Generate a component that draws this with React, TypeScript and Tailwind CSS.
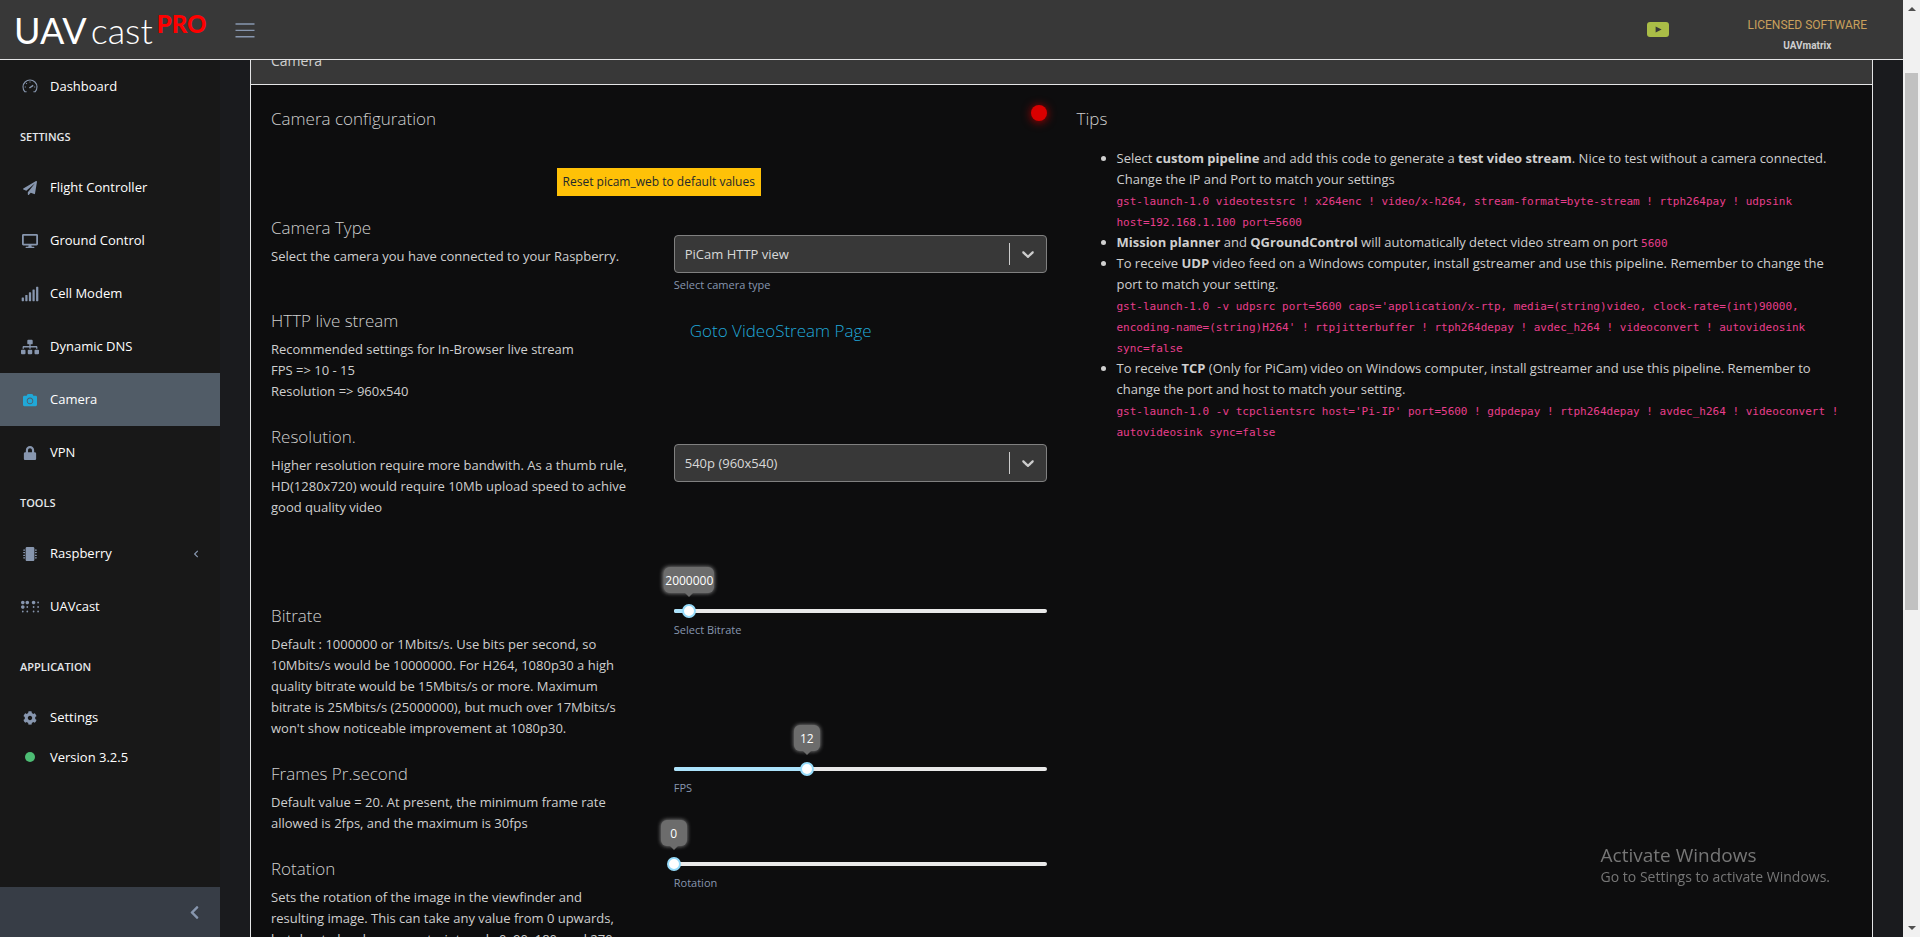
import { useState, type ReactNode } from "react";
import {
  FaBraille,
  FaCamera,
  FaChevronLeft,
  FaCog,
  FaDesktop,
  FaLock,
  FaMicrochip,
  FaPaperPlane,
  FaSignal,
  FaSitemap,
} from "react-icons/fa";

function SpeedometerIcon() {
  return (
    <svg viewBox="0 0 16 16" className="h-4 w-4" fill="none" stroke="currentColor" strokeWidth="1.1">
      <path d="M4.6 12.8H2.9A7 7 0 1 1 13.1 12.8h-1.7" />
      <path d="M7.4 9 11.2 6.4" strokeWidth="1.5" />
      <path d="M8 2.6v1M4.2 4.2l.7.7M2.8 8h1M12.2 8h1" />
    </svg>
  );
}

function DotIcon() {
  return <span className="block h-[10px] w-[10px] rounded-full bg-[#4dbd74]" />;
}

function Logo() {
  return (
    <a href="#home" className="flex w-[206px] items-start pl-[14px] font-[Lato,sans-serif] leading-[58px] text-white">
      <span className="text-[36px]">UAV</span>
      <span className="px-1 text-[36px] font-light">cast</span>
      <span className="text-[24px] font-black leading-[46px] text-[#fe0000]">PRO</span>
    </a>
  );
}

function Header() {
  return (
    <header className="z-10 flex h-[60px] shrink-0 items-center border-b border-[#e4e5e6] bg-[#383838]">
      <Logo />
      <button type="button" aria-label="Toggle sidebar" className="ml-[29px] text-[#8796ae]">
        <svg viewBox="0 0 20 16" className="h-4 w-5" stroke="currentColor" strokeWidth="1.4">
          <path d="M.5 2h19M.5 8.4h19M.5 14.8h19" />
        </svg>
      </button>
      <a href="#youtube" aria-label="YouTube" className="ml-auto">
        <svg viewBox="0 0 22 15" className="h-[15px] w-[22px]">
          <rect width="22" height="15" rx="3" fill="#aabd47" />
          <path d="M8.6 4.5v6l6-3z" fill="#383838" />
        </svg>
      </a>
      <div className="mr-9 ml-[78px] pt-2 text-center font-[Roboto,sans-serif]">
        <div className="text-[12px] leading-6 text-[#c9a05c]">LICENSED SOFTWARE</div>
        <div className="text-[10px] leading-[18px] font-bold text-[#cfcfcf]">UAVmatrix</div>
      </div>
    </header>
  );
}

type NavItemProps = { icon: ReactNode; label: string; active?: boolean; children?: ReactNode };

function NavItem({ icon, label, active, children }: NavItemProps) {
  return (
    <a
      href={"#" + label}
      className={
        active
          ? "flex h-[53px] items-center bg-[#515c67] px-5 text-[#20a8d8]"
          : "flex h-[53px] items-center px-5 text-[#8796ae]"
      }
    >
      <span className="flex w-5 justify-center text-[14px]">{icon}</span>
      <span className="pl-[10px] text-white">{label}</span>
      {children}
    </a>
  );
}

function NavTitle({ children }: { children: string }) {
  return <div className="h-12 px-5 text-[11px] leading-[48px] font-semibold text-[#e4e7ea]">{children}</div>;
}

function Sidebar() {
  return (
    <aside className="flex w-[220px] shrink-0 flex-col bg-[#181818]">
      <nav className="flex-1 overflow-hidden">
        <NavItem icon={<SpeedometerIcon />} label="Dashboard" />
        <NavTitle>SETTINGS</NavTitle>
        <NavItem icon={<FaPaperPlane />} label="Flight Controller" />
        <NavItem icon={<FaDesktop className="h-4 w-4" />} label="Ground Control" />
        <NavItem icon={<FaSignal className="h-[18px] w-[18px]" />} label="Cell Modem" />
        <NavItem icon={<FaSitemap className="h-[18px] w-[18px]" />} label="Dynamic DNS" />
        <NavItem icon={<FaCamera />} label="Camera" active />
        <NavItem icon={<FaLock />} label="VPN" />
        <NavTitle>TOOLS</NavTitle>
        <NavItem icon={<FaMicrochip />} label="Raspberry">
          <FaChevronLeft className="ml-auto h-2 w-2" />
        </NavItem>
        <NavItem icon={<FaBraille className="h-[18px] w-[18px]" />} label="UAVcast" />
        <div className="pt-[10px]">
          <NavTitle>APPLICATION</NavTitle>
        </div>
        <NavItem icon={<FaCog />} label="Settings" />
        <div className="flex h-[26px] items-center px-5 text-white">
          <span className="flex w-5 justify-center">
            <DotIcon />
          </span>
          <span className="pl-[10px]">Version 3.2.5</span>
        </div>
      </nav>
      <button
        type="button"
        aria-label="Minimize sidebar"
        className="flex h-[50px] items-center justify-end bg-[#373d46] px-[18px] text-[#8796ae]"
      >
        <FaChevronLeft className="h-[15px] w-[15px]" />
      </button>
    </aside>
  );
}

type SelectProps = { id: string; options: string[]; label?: string };

function Select({ id, options, label }: SelectProps) {
  return (
    <div className="pt-[18px]">
      <div className="relative">
        <select
          id={id}
          aria-label={label ? undefined : id}
          className="block h-[38px] w-full appearance-none rounded border border-[#808080] bg-[#383838] px-[10px] text-[#d8d8d8]"
        >
          {options.map((o) => (
            <option key={o}>{o}</option>
          ))}
        </select>
        <div className="pointer-events-none absolute inset-y-2 right-0 flex w-[38px] items-center justify-center border-l border-[#cccccc] text-[#cccccc]">
          <svg viewBox="0 0 20 20" className="h-5 w-5" fill="currentColor">
            <path d="M4.516 7.548c.436-.446 1.043-.481 1.576 0L10 11.295l3.908-3.747c.533-.481 1.141-.446 1.574 0 .436.445.408 1.197 0 1.615-.406.418-4.695 4.502-4.695 4.502a1.095 1.095 0 0 1-1.576 0S4.924 9.581 4.516 9.163s-.436-1.17 0-1.615z" />
          </svg>
        </div>
      </div>
      {label && (
        <label htmlFor={id} className="mt-1 block text-[11px] leading-4 text-[#8796ae]">
          {label}
        </label>
      )}
    </div>
  );
}

type SliderProps = { id: string; label: string; min: number; max: number; start: number };

function Slider({ id, label, min, max, start }: SliderProps) {
  const [value, setValue] = useState(start);
  const percent = ((value - min) / (max - min)) * 100 + "%";

  return (
    <div>
      <div className="relative h-3 pt-1">
        <div className="h-1 rounded-full bg-[#e9e9e9]">
          <div className="h-1 rounded-full bg-[#abe2fb]" style={{ width: percent }} />
        </div>
        {/* the input is wider than the rail so the thumb can centre on both ends */}
        <input
          id={id}
          type="range"
          min={min}
          max={max}
          value={value}
          onChange={(e) => setValue(Number(e.target.value))}
          className="absolute inset-y-0 -left-[7px] m-0 h-3 w-[calc(100%+14px)] cursor-pointer appearance-none bg-transparent [&::-webkit-slider-thumb]:h-[14px] [&::-webkit-slider-thumb]:w-[14px] [&::-webkit-slider-thumb]:appearance-none [&::-webkit-slider-thumb]:rounded-full [&::-webkit-slider-thumb]:border-2 [&::-webkit-slider-thumb]:border-solid [&::-webkit-slider-thumb]:border-[#96dbfa] [&::-webkit-slider-thumb]:bg-white"
        />
        <output
          htmlFor={id}
          className="absolute bottom-6 flex h-[26px] min-w-[26px] -translate-x-1/2 items-center justify-center rounded-md bg-[#6c6c6c] px-px text-[12px] text-white shadow-[0_0_4px_#9a9a9a]"
          style={{ left: percent }}
        >
          {value}
          <span className="absolute top-full border-x-4 border-t-4 border-x-transparent border-t-[#6c6c6c]" />
        </output>
      </div>
      <label htmlFor={id} className="mt-[5px] block text-[11px] leading-4 text-[#8796ae]">
        {label}
      </label>
    </div>
  );
}

type FieldProps = { title: string; text: ReactNode; className: string; children: ReactNode };

function Field({ title, text, className, children }: FieldProps) {
  return (
    <div className={"grid grid-cols-2 gap-[30px] " + className}>
      <div>
        <Heading>{title}</Heading>
        <p className="mt-2 pr-3">{text}</p>
      </div>
      {children}
    </div>
  );
}

function Heading({ children }: { children: string }) {
  return <h5 className="text-[17px] leading-[21px] font-light">{children}</h5>;
}

function Code({ children }: { children: string }) {
  return <code className="font-['DejaVu_Sans_Mono',monospace] text-[11px] leading-4 text-[#e83e8c]">{children}</code>;
}

function CameraForm() {
  return (
    <form>
      <div className="flex items-start justify-between">
        <div className="pt-[3px]">
          <Heading>Camera configuration</Heading>
        </div>
        <span className="h-4 w-4 rounded-full bg-[#d90000] shadow-[0_1px_10px_#b00000]" />
      </div>
      <div className="mt-[39px] mb-[21px] text-center">
        <button type="button" className="h-7 bg-[#ffc107] px-[6px] text-[12px] leading-7 text-[#23282c]">
          Reset picam_web to default values
        </button>
      </div>
      <Field title="Camera Type" text="Select the camera you have connected to your Raspberry." className="min-h-[93px]">
        <Select id="camera-type" options={["PiCam HTTP view"]} label="Select camera type" />
      </Field>
      <Field
        title="HTTP live stream"
        text={
          <>
            Recommended settings for In-Browser live stream
            <br />
            FPS =&gt; 10 - 15
            <br />
            Resolution =&gt; 960x540
          </>
        }
        className="pb-6"
      >
        <a href="#video" className="px-4 pt-[10px] text-[17px] leading-[21px] font-light text-[#20a8d8]">
          Goto VideoStream Page
        </a>
      </Field>
      <Field
        title="Resolution."
        text="Higher resolution require more bandwith. As a thumb rule, HD(1280x720) would require 10Mb upload speed to achive good quality video"
        className="pb-[87px]"
      >
        <Select id="resolution" options={["540p (960x540)"]} />
      </Field>
      <Field
        title="Bitrate"
        text="Default : 1000000 or 1Mbits/s. Use bits per second, so 10Mbits/s would be 10000000. For H264, 1080p30 a high quality bitrate would be 15Mbits/s or more. Maximum bitrate is 25Mbits/s (25000000), but much over 17Mbits/s won't show noticeable improvement at 1080p30."
        className="pb-6"
      >
        <Slider id="bitrate" label="Select Bitrate" min={1000000} max={25000000} start={2000000} />
      </Field>
      <Field
        title="Frames Pr.second"
        text="Default value = 20. At present, the minimum frame rate allowed is 2fps, and the maximum is 30fps"
        className="pb-6"
      >
        <Slider id="fps" label="FPS" min={2} max={30} start={12} />
      </Field>
      <Field
        title="Rotation"
        text="Sets the rotation of the image in the viewfinder and resulting image. This can take any value from 0 upwards, but due to hardware constraints only 0, 90, 180, and 270 degree rotations are supported."
        className="pb-6"
      >
        <Slider id="rotation" label="Rotation" min={0} max={270} start={0} />
      </Field>
    </form>
  );
}

function Tips() {
  return (
    <section className="pt-[3px]">
      <Heading>Tips</Heading>
      <ul className="mt-[19px] list-disc pl-10">
        <li>
          Select <b>custom pipeline</b> and add this code to generate a <b>test video stream</b>. Nice to test without a
          camera connected. Change the IP and Port to match your settings
          <br />
          <Code>
            gst-launch-1.0 videotestsrc ! x264enc ! video/x-h264, stream-format=byte-stream ! rtph264pay ! udpsink
            host=192.168.1.100 port=5600
          </Code>
        </li>
        <li>
          <b>Mission planner</b> and <b>QGroundControl</b> will automatically detect video stream on port{" "}
          <Code>5600</Code>
        </li>
        <li>
          To receive <b>UDP</b> video feed on a Windows computer, install gstreamer and use this pipeline. Remember to
          change the port to match your setting.
          <br />
          <Code>
            gst-launch-1.0 -v udpsrc port=5600 caps='application/x-rtp, media=(string)video, clock-rate=(int)90000,
            encoding-name=(string)H264' ! rtpjitterbuffer ! rtph264depay ! avdec_h264 ! videoconvert ! autovideosink
            sync=false
          </Code>
        </li>
        <li>
          To receive <b>TCP</b> (Only for PiCam) video on Windows computer, install gstreamer and use this pipeline.
          Remember to change the port and host to match your setting.
          <br />
          <Code>
            gst-launch-1.0 -v tcpclientsrc host='Pi-IP' port=5600 ! gdpdepay ! rtph264depay ! avdec_h264 ! videoconvert !
            autovideosink sync=false
          </Code>
        </li>
      </ul>
    </section>
  );
}

function ScrollBar() {
  return (
    <div aria-hidden="true" className="flex w-[17px] shrink-0 flex-col items-center justify-between bg-[#f1f1f1] py-[7px]">
      <span className="border-x-4 border-b-4 border-x-transparent border-b-[#505050]" />
      <div className="flex w-[13px] flex-1 flex-col pt-[62px]">
        <div className="h-[63%] bg-[#c1c1c1]" />
      </div>
      <span className="border-x-4 border-t-4 border-x-transparent border-t-[#505050]" />
    </div>
  );
}

export default function App() {
  return (
    <div className="flex h-screen overflow-hidden font-['Open_Sans','Noto_Sans',sans-serif] text-[13px] leading-[21px] text-[#cfcfcf]">
      <div className="flex min-w-0 flex-1 flex-col">
        <Header />
        <div className="flex min-h-0 flex-1">
          <Sidebar />
          <main className="min-w-0 flex-1 overflow-hidden bg-[#1a1b1e] px-[30px]">
            {/* page is scrolled a little, so the card starts under the header */}
            <div className="-mt-6 border border-[#e4e5e6] bg-[#0d0d0e]">
              <div className="h-12 border-b border-[#e4e5e6] bg-[#383838] px-5 text-[14px] leading-[47px]">Camera</div>
              <div className="grid grid-cols-2 gap-[30px] p-5">
                <CameraForm />
                <Tips />
              </div>
            </div>
          </main>
        </div>
      </div>
      <ScrollBar />
      <div className="pointer-events-none fixed right-[90px] bottom-[50px] z-20 text-[#767676]">
        <div className="text-[19px] leading-6">Activate Windows</div>
        <div className="text-[14px] leading-5">Go to Settings to activate Windows.</div>
      </div>
    </div>
  );
}
